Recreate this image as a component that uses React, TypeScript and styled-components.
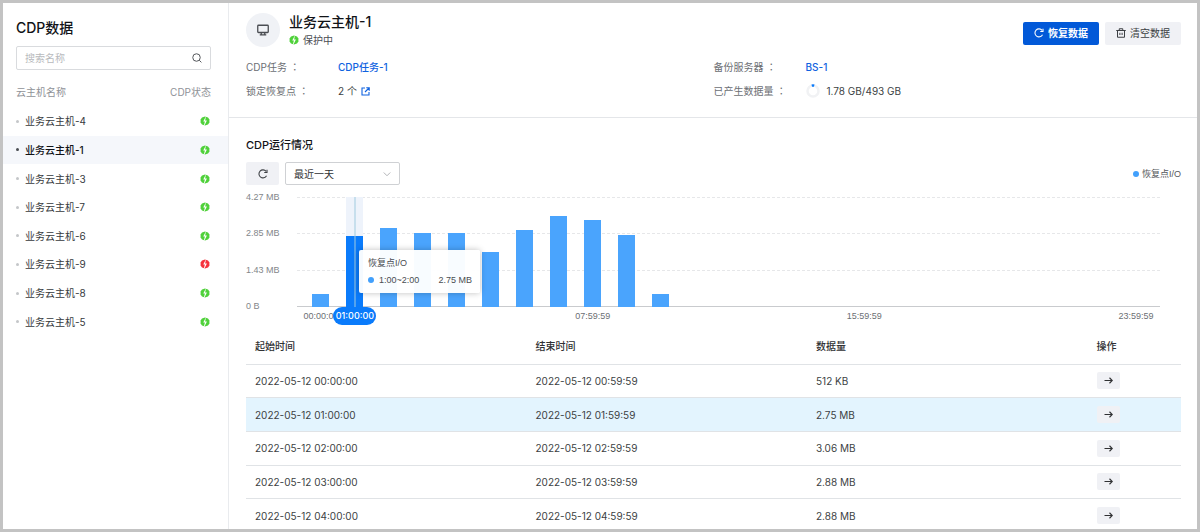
import React, { useState } from "react";
import styled, { createGlobalStyle } from "styled-components";

const GlobalStyle = createGlobalStyle`
  *, *::before, *::after { box-sizing: border-box; }
  body {
    margin: 0;
    background: #fff;
    color: #303133;
    font: 10px/16px Inter, "Noto Sans CJK SC", sans-serif;
  }
  button, input, select { font: inherit; color: inherit; margin: 0; }
  h1, h2, h3, p, ul, dl, dd { margin: 0; padding: 0; }
  a { color: #0f62e0; text-decoration: none; }
`;

const Frame = styled.div`
  display: flex;
  height: 100vh;
  border: 3px solid #c3c3c3;
  overflow: hidden;
`;

/* Sidebar */

const Sidebar = styled.aside`
  flex: none;
  width: 226px;
  border-right: 1px solid #e9ebee;
`;

const SidebarTop = styled.div`
  padding: 15px 17px 0 13px;
`;

const SidebarTitle = styled.h2`
  font-size: 14px;
  line-height: 20px;
  font-weight: 500;
  color: #111317;
`;

const SearchBox = styled.label`
  display: flex;
  align-items: center;
  height: 24px;
  margin-top: 8px;
  padding: 0 8px;
  border: 1px solid #d9dbde;
  border-radius: 2px;
  color: #55585c;
`;

const SearchInput = styled.input`
  flex: 1;
  min-width: 0;
  padding: 0;
  border: 0;
  outline: 0;
  background: none;
  &::placeholder { color: #b8babd; opacity: 1; }
`;

const ListHead = styled.div`
  display: flex;
  justify-content: space-between;
  margin-top: 14px;
  margin-bottom: 7px;
  color: #8f9297;
`;

const HostList = styled.ul`
  display: grid;
  grid-auto-rows: 1fr;
  height: 229px;
  list-style: none;
`;

const HostItem = styled.li`
  display: grid;
`;

const HostButton = styled.button<{ $active: boolean }>`
  display: flex;
  align-items: center;
  gap: 6px;
  padding: 0 18px 0 13px;
  border: 0;
  cursor: pointer;
  text-align: left;
  background: ${(p) => (p.$active ? "#f5f7fb" : "transparent")};
  color: ${(p) => (p.$active ? "#111317" : "#36393d")};
  font-weight: ${(p) => (p.$active ? 500 : 400)};
  &::before {
    content: "";
    width: 3px;
    height: 3px;
    border-radius: 50%;
    background: ${(p) => (p.$active ? "#4a4d52" : "#c4c6c9")};
  }
  svg { margin-left: auto; }
`;

/* Main column */

const Main = styled.main`
  flex: 1;
  min-width: 0;
  overflow-y: auto;
  scrollbar-width: none;
`;

const Header = styled.header`
  padding: 9px 16px 18px 17px;
  border-bottom: 1px solid #e4e6e9;
`;

const HeaderTop = styled.div`
  display: flex;
  align-items: center;
  gap: 9px;
`;

const Avatar = styled.div`
  display: grid;
  place-items: center;
  width: 34px;
  height: 34px;
  border-radius: 50%;
  background: #f0f2f6;
  color: #4a4d52;
`;

const HostTitle = styled.h1`
  font-size: 14px;
  line-height: 20px;
  font-weight: 500;
  color: #111317;
`;

const HostStatus = styled.p`
  display: flex;
  align-items: center;
  gap: 4px;
  color: #4a4d52;
`;

const Actions = styled.div`
  display: flex;
  gap: 6px;
  margin-left: auto;
`;

const ActionButton = styled.button<{ $primary?: boolean }>`
  display: flex;
  align-items: center;
  justify-content: center;
  gap: 4px;
  width: 76px;
  height: 23px;
  margin-top: 6px;
  padding: 0;
  border: 0;
  border-radius: 2px;
  cursor: pointer;
  background: ${(p) => (p.$primary ? "#0259d8" : "#f0f1f5")};
  color: ${(p) => (p.$primary ? "#fff" : "#3c3f43")};
  font-weight: ${(p) => (p.$primary ? 600 : 400)};
`;

const InfoGrid = styled.dl`
  display: grid;
  grid-template-columns: 1fr 1fr;
  row-gap: 8px;
  margin-top: 11px;
`;

const InfoPair = styled.div`
  display: flex;
  dt { width: 92px; color: #6c6f74; }
  dd { display: flex; align-items: center; gap: 4px; color: #3c3f43; }
  a { display: flex; font-weight: 500; }
`;

/* Traditional Chinese glyphs set the full-width colon in the middle of its cell. */
const Colon = styled.span`
  font-family: "Noto Sans CJK TC", sans-serif;
  line-height: 1;
`;

const UsageText = styled.span`
  margin-left: 3px;
`;

const Section = styled.section`
  padding: 18px 16px 0 17px;
`;

const SectionTitle = styled.h3`
  font-size: 11px;
  line-height: 18px;
  font-weight: 500;
  color: #111317;
`;

const Toolbar = styled.div`
  display: flex;
  align-items: center;
  gap: 6px;
  margin-top: 8px;
`;

const IconButton = styled.button`
  display: grid;
  place-items: center;
  width: 33px;
  height: 23px;
  padding: 0;
  border: 0;
  border-radius: 2px;
  background: #f0f1f5;
  color: #3c3f43;
  cursor: pointer;
`;

const SelectWrap = styled.div`
  display: grid;
  align-items: center;
  width: 115px;
  height: 23px;
  select, svg { grid-area: 1 / 1; }
  svg { justify-self: end; margin-right: 9px; pointer-events: none; }
`;

const RangeSelect = styled.select`
  appearance: none;
  width: 100%;
  height: 23px;
  padding: 0 20px 0 8px;
  border: 1px solid #cfd1d4;
  border-radius: 2px;
  background: #fff;
`;

const chartFont = `"Liberation Sans", "Noto Sans CJK SC", sans-serif`;

const Legend = styled.div`
  display: flex;
  align-items: center;
  gap: 3px;
  margin-left: auto;
  font: 9px/12px ${chartFont};
  color: #55585c;
`;

const Dot = styled.i`
  width: 6px;
  height: 6px;
  border-radius: 50%;
  background: #42a0fc;
`;

/* Chart */

const Chart = styled.div`
  display: grid;
  grid-template-columns: 51px 1fr;
  margin: 12px 21px 0 0;
  font: 9px/12px ${chartFont};
`;

const YAxis = styled.div`
  display: flex;
  flex-direction: column;
  justify-content: space-between;
  height: 121px;
  margin: -6px 0;
  color: #83868a;
`;

const Plot = styled.div`
  display: grid;
  height: 110px;
`;

const GridLines = styled.div`
  grid-area: 1 / 1;
  display: flex;
  flex-direction: column;
  justify-content: space-between;
`;

const GridLine = styled.div<{ $axis?: boolean }>`
  height: 1px;
  background: ${(p) =>
    p.$axis
      ? "#c9cbce"
      : "repeating-linear-gradient(90deg, #e6e7e9 0 3px, transparent 3px 5px)"};
`;

const Columns = styled.div`
  grid-area: 1 / 1;
  display: grid;
  grid-template-columns: repeat(25, minmax(0, 1fr));
  padding: 0 7px;
`;

const Column = styled.div<{ $active: boolean }>`
  position: relative;
  display: flex;
  align-items: flex-end;
  justify-self: center;
  width: 50%;
  background: ${(p) => (p.$active ? "#eef3fb" : "transparent")};
`;

const Bar = styled.div<{ $active: boolean }>`
  width: 100%;
  background: ${(p) => (p.$active ? "#0a7bfb" : "#4aa4fd")};
`;

const Pointer = styled.div`
  position: absolute;
  top: 0;
  bottom: 0;
  left: calc(50% - 1px);
  width: 2px;
  background: rgba(160, 204, 224, 0.5);
`;

const Tooltip = styled.div`
  position: absolute;
  z-index: 2;
  top: 53px;
  left: calc(50% + 4px);
  width: 121px;
  padding: 7px 8px 7px 9px;
  border-radius: 2px;
  background: rgba(255, 255, 255, 0.96);
  box-shadow: 0 0 6px rgba(0, 0, 0, 0.25);
  color: #4a4d52;
`;

const TooltipRow = styled.div`
  display: flex;
  align-items: center;
  gap: 5px;
  margin-top: 5px;
  white-space: nowrap;
  b { margin-left: auto; font-weight: 400; }
`;

const XAxis = styled.div`
  grid-column: 2;
  display: grid;
  grid-template-columns: repeat(25, minmax(0, 1fr));
  height: 22px;
  padding: 0 7px;
  color: #6c6f74;
`;

const Tick = styled.div`
  position: relative;
  display: flex;
  justify-content: center;
  padding-top: 3px;
`;

const Pill = styled.span`
  position: absolute;
  z-index: 1;
  top: 0;
  align-self: start;
  width: 43px;
  border-radius: 9px;
  background: #0a7bfb;
  color: #fff;
  font: 500 9px/18px Inter, sans-serif;
  text-align: center;
`;

/* Table */

const Table = styled.table`
  width: 100%;
  height: 204px;
  table-layout: fixed;
  border-collapse: collapse;
  th, td { padding: 0 9px; text-align: left; border-bottom: 1px solid #e0e3e6; }
  th { width: 30%; height: 35px; font-weight: 500; color: #303133; }
  th:last-child { width: 10%; }
  td { color: #3c3f43; }
`;

const Row = styled.tr<{ $active: boolean }>`
  background: ${(p) => (p.$active ? "#e3f4fe" : "transparent")};
`;

const GoButton = styled.button`
  display: grid;
  place-items: center;
  width: 23px;
  height: 17px;
  padding: 0;
  border: 0;
  border-radius: 2px;
  background: #f0f1f5;
  color: #303133;
  cursor: pointer;
`;

/* Icons */

const StatusIcon = ({ error, label }: { error?: boolean; label: string }) => (
  <svg width="10" height="10" viewBox="0 0 20 20" role="img" aria-label={label}>
    <path
      d="M10 .8 16 3l2.800 4v6L16 17l-6 2.200L4 17l-2.800-4V7L4 3z"
      fill={error ? "#f5323c" : "#4fd13a"}
    />
    <path d="M12.200 0 10.800 2.500 6.500 11h3.300L7.500 20l1.700-1.500L13.800 9h-3.600z" fill="#fff" />
  </svg>
);

const SearchIcon = () => (
  <svg width="10" height="10" viewBox="0 0 20 20" fill="none" stroke="currentColor" strokeWidth="2">
    <circle cx="9" cy="9" r="7.500" />
    <path d="m14.500 14.500 4.300 4.300" />
  </svg>
);

const MonitorIcon = () => (
  <svg width="12" height="12" viewBox="0 0 24 24" fill="none" stroke="currentColor" strokeWidth="2.600">
    <rect x="1.500" y="2.500" width="21" height="14.500" rx="1.500" />
    <path d="M8.500 17v4M15.500 17v4M5.500 21.700h13" />
  </svg>
);

const RefreshIcon = () => (
  <svg width="10" height="10" viewBox="0 0 20 20" fill="none" stroke="currentColor" strokeWidth="2.200">
    <path d="M17 13.500a8 8 0 1 1-.8-8.600" />
    <path d="M18 1.500v5.500h-5.500" />
  </svg>
);

const TrashIcon = () => (
  <svg width="10" height="10" viewBox="0 0 20 20" fill="none" stroke="currentColor" strokeWidth="2">
    <path d="M.5 5h19M6.500 5V1.500h7V5M3 5v13.500h14V5M7.800 9.500v4.500M12.200 9.500v4.500" />
  </svg>
);

const OpenIcon = () => (
  <svg width="9" height="9" viewBox="0 0 18 18" fill="none" stroke="currentColor" strokeWidth="2.200">
    <path d="M8 2H2v14h14v-6M10.500 1.500h6v6M16 2 8 10" />
  </svg>
);

const ChevronIcon = () => (
  <svg width="8" height="8" viewBox="0 0 16 16" fill="none" stroke="#a9acb0" strokeWidth="1.800">
    <path d="m1.500 5 6.500 6.500L14.500 5" />
  </svg>
);

const ArrowIcon = () => (
  <svg width="9" height="9" viewBox="0 0 18 18" fill="none" stroke="currentColor" strokeWidth="2.200">
    <path d="M1 9h15M11 3.500 16.500 9 11 14.500" />
  </svg>
);

const UsageRing = () => (
  <svg width="14" height="14" viewBox="0 0 28 28" fill="none" strokeWidth="5">
    <circle cx="14" cy="14" r="11" stroke="#f1f2f4" />
    <path d="M11.500 3.300a11 11 0 0 1 5 0" stroke="#0a7bfb" />
  </svg>
);

/* Data */

const hosts = [4, 1, 3, 7, 6, 9, 8, 5].map((n) => ({
  name: `业务云主机-${n}`,
  error: n === 9,
}));

const MAX = 4.27;
const volumes = [0.5, 2.75, 3.06, 2.88, 2.88, 2.12, 2.98, 3.54, 3.36, 2.79, 0.5];
const slots = Array.from({ length: 25 }, (_, i) => volumes[i] ?? 0);
const ticks: Record<number, string> = {
  0: "00:00:00",
  8: "07:59:59",
  16: "15:59:59",
  24: "23:59:59",
};
const sizes = ["512 KB", "2.75 MB", "3.06 MB", "2.88 MB", "2.88 MB"];

export default function App() {
  const [selected, setSelected] = useState("业务云主机-1");
  const [hour, setHour] = useState(1);

  return (
    <>
      <GlobalStyle />
      <Frame>
        <Sidebar>
          <SidebarTop>
            <SidebarTitle>CDP数据</SidebarTitle>
            <SearchBox>
              <SearchInput type="text" placeholder="搜索名称" aria-label="搜索名称" />
              <SearchIcon />
            </SearchBox>
            <ListHead>
              <span>云主机名称</span>
              <span>CDP状态</span>
            </ListHead>
          </SidebarTop>
          <HostList>
            {hosts.map((h) => (
              <HostItem key={h.name}>
                <HostButton $active={h.name === selected} onClick={() => setSelected(h.name)}>
                  {h.name}
                  <StatusIcon error={h.error} label={h.error ? "异常" : "保护中"} />
                </HostButton>
              </HostItem>
            ))}
          </HostList>
        </Sidebar>

        <Main>
          <Header>
            <HeaderTop>
              <Avatar>
                <MonitorIcon />
              </Avatar>
              <div>
                <HostTitle>{selected}</HostTitle>
                <HostStatus>
                  <StatusIcon label="正常" />
                  保护中
                </HostStatus>
              </div>
              <Actions>
                <ActionButton $primary>
                  <RefreshIcon />
                  恢复数据
                </ActionButton>
                <ActionButton>
                  <TrashIcon />
                  清空数据
                </ActionButton>
              </Actions>
            </HeaderTop>
            <InfoGrid>
              <InfoPair>
                <dt>CDP任务 <Colon>：</Colon></dt>
                <dd><a href="#task">CDP任务-1</a></dd>
              </InfoPair>
              <InfoPair>
                <dt>备份服务器 <Colon>：</Colon></dt>
                <dd><a href="#server">BS-1</a></dd>
              </InfoPair>
              <InfoPair>
                <dt>锁定恢复点 <Colon>：</Colon></dt>
                <dd>
                  2 个
                  <a href="#points" aria-label="查看恢复点"><OpenIcon /></a>
                </dd>
              </InfoPair>
              <InfoPair>
                <dt>已产生数据量 <Colon>：</Colon></dt>
                <dd>
                  <UsageRing />
                  <UsageText>1.78 GB/493 GB</UsageText>
                </dd>
              </InfoPair>
            </InfoGrid>
          </Header>

          <Section>
            <SectionTitle>CDP运行情况</SectionTitle>
            <Toolbar>
              <IconButton aria-label="刷新"><RefreshIcon /></IconButton>
              <SelectWrap>
                <RangeSelect aria-label="时间范围">
                  <option>最近一天</option>
                </RangeSelect>
                <ChevronIcon />
              </SelectWrap>
              <Legend>
                <Dot />
                恢复点I/O
              </Legend>
            </Toolbar>

            <Chart>
              <YAxis>
                <span>4.27 MB</span>
                <span>2.85 MB</span>
                <span>1.43 MB</span>
                <span>0 B</span>
              </YAxis>
              <Plot>
                <GridLines>
                  <GridLine />
                  <GridLine />
                  <GridLine />
                  <GridLine $axis />
                </GridLines>
                <Columns>
                  {slots.map((v, i) => (
                    <Column key={i} $active={i === hour}>
                      <Bar $active={i === hour} style={{ height: `${(v / MAX) * 100}%` }} />
                      {i === hour && (
                        <>
                          <Pointer />
                          <Tooltip>
                            恢复点I/O
                            <TooltipRow>
                              <Dot />
                              {`${i}:00~${i + 1}:00`}
                              <b>{v} MB</b>
                            </TooltipRow>
                          </Tooltip>
                        </>
                      )}
                    </Column>
                  ))}
                </Columns>
              </Plot>
              <XAxis>
                {slots.map((_, i) => (
                  <Tick key={i}>
                    {ticks[i]}
                    {i === hour && <Pill>{`${String(i).padStart(2, "0")}:00:00`}</Pill>}
                  </Tick>
                ))}
              </XAxis>
            </Chart>

            <Table>
              <thead>
                <tr>
                  <th>起始时间</th>
                  <th>结束时间</th>
                  <th>数据量</th>
                  <th>操作</th>
                </tr>
              </thead>
              <tbody>
                {sizes.map((size, i) => (
                  <Row key={i} $active={i === hour}>
                    <td>{`2022-05-12 0${i}:00:00`}</td>
                    <td>{`2022-05-12 0${i}:59:59`}</td>
                    <td>{size}</td>
                    <td>
                      <GoButton aria-label="查看" onClick={() => setHour(i)}>
                        <ArrowIcon />
                      </GoButton>
                    </td>
                  </Row>
                ))}
              </tbody>
            </Table>
          </Section>
        </Main>
      </Frame>
    </>
  );
}
